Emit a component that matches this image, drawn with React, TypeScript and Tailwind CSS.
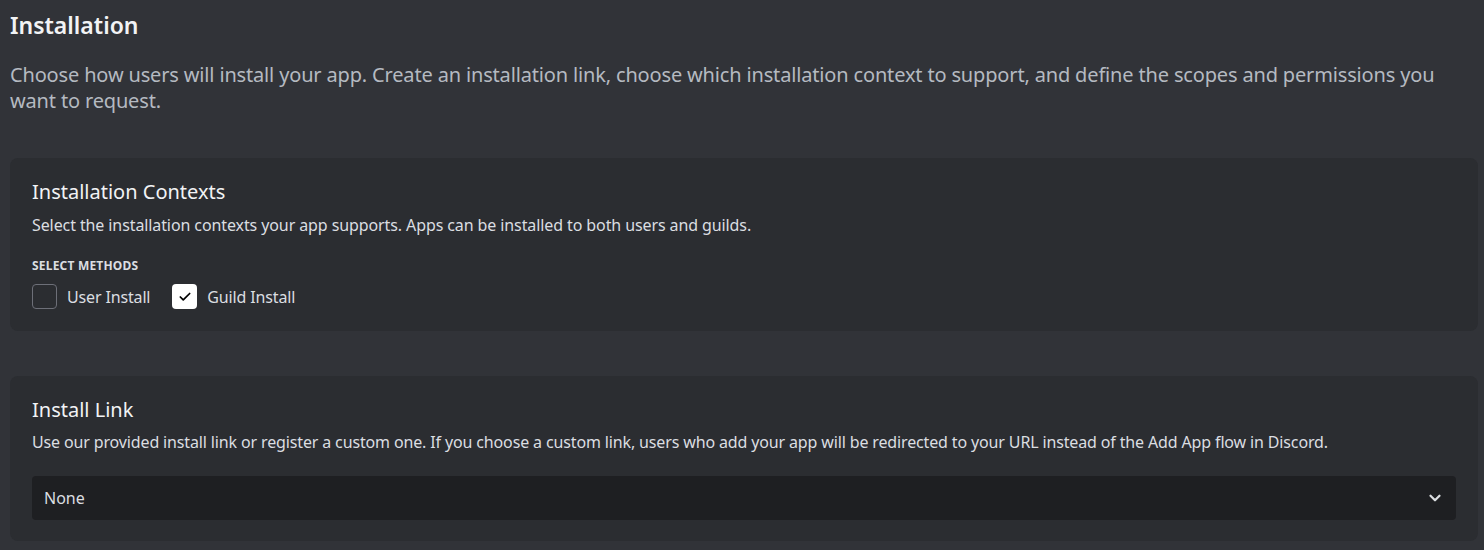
import { Check, ChevronDown } from 'lucide-react';

const font = { fontFamily: '"Noto Sans", "Open Sans", sans-serif' };

function Checkbox({ label, checked }: { label: string; checked: boolean }) {
  return (
    <label className="flex items-center gap-[10px] cursor-pointer">
      <span
        className={
          checked
            ? 'w-[25px] h-[25px] rounded-[4px] bg-white flex items-center justify-center'
            : 'w-[25px] h-[25px] rounded-[4px] border border-[#6d6f78] bg-transparent'
        }
      >
        {checked && <Check className="w-[14px] h-[14px] text-black" strokeWidth={3} />}
      </span>
      <span className="text-[16px] tracking-[-0.15px] text-[#dbdee1]">{label}</span>
    </label>
  );
}

export default function App() {
  return (
    <div className="w-[1484px] h-[550px] bg-[#313338] pl-[10px] pr-[6px] overflow-hidden" style={font}>
      {/* Page header */}
      <h1 className="pt-[9px] text-[23px] leading-[32px] font-semibold text-[#f2f3f5]">Installation</h1>
      <p className="mt-[21px] text-[20px] leading-[26px] tracking-[-0.16px] text-[#b5bac1]">
        Choose how users will install your app. Create an installation link, choose which installation context to
        support, and define the scopes and permissions you want to request.
      </p>

      {/* Installation contexts */}
      <section className="mt-[44px] bg-[#2b2d31] rounded-[8px] px-[22px] pt-[20px] pb-[22px]">
        <h2 className="text-[20px] leading-[28px] text-[#f2f3f5]">Installation Contexts</h2>
        <p className="mt-[8px] text-[16px] leading-[22px] tracking-[-0.1px] text-[#dbdee1]">
          Select the installation contexts your app supports. Apps can be installed to both users and guilds.
        </p>
        <div className="mt-[22px] text-[12px] leading-[16px] font-bold tracking-[0.2px] text-[#dbdee1] uppercase">
          Select Methods
        </div>
        <div className="mt-[10px] flex items-center gap-[22px]">
          <Checkbox label="User Install" checked={false} />
          <Checkbox label="Guild Install" checked />
        </div>
      </section>

      {/* Install link */}
      <section className="mt-[45px] bg-[#2b2d31] rounded-[8px] px-[22px] pt-[20px] pb-[21px]">
        <h2 className="text-[20px] leading-[28px] text-[#f2f3f5]">Install Link</h2>
        <p className="mt-[7px] text-[16px] leading-[22px] tracking-[-0.14px] text-[#dbdee1]">
          Use our provided install link or register a custom one. If you choose a custom link, users who add your app will
          be redirected to your URL instead of the Add App flow in Discord.
        </p>
        <div className="mt-[23px] h-[44px] bg-[#1e1f22] rounded-[4px] flex items-center justify-between pl-[12px] pr-[12px]">
          <span className="text-[16px] text-[#dbdee1]">None</span>
          <ChevronDown className="w-[18px] h-[18px] text-[#dbdee1]" strokeWidth={3} />
        </div>
      </section>
    </div>
  );
}
